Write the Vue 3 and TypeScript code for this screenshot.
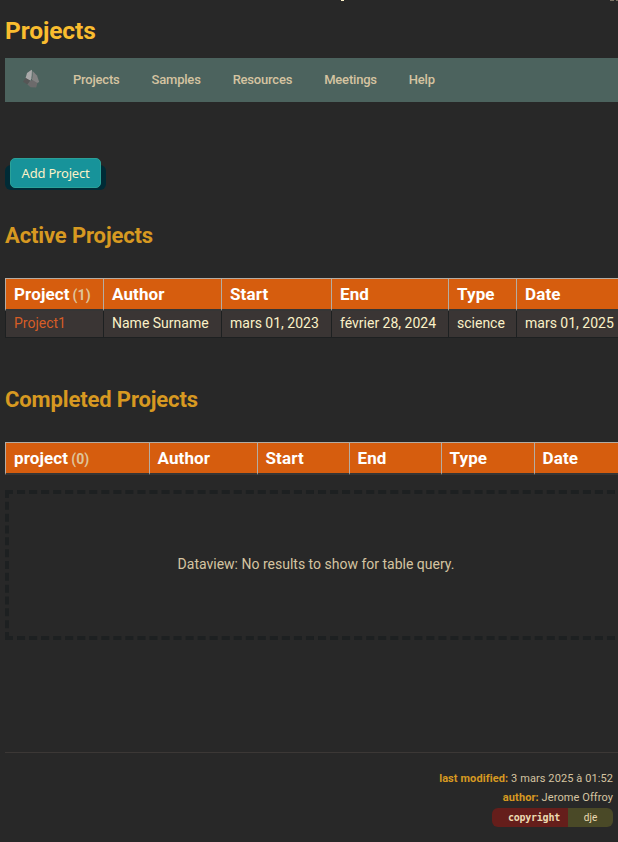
<script setup lang="ts">
interface Column { label: string; width: number; count?: number }

const links: string[] = ['Projects', 'Samples', 'Resources', 'Meetings', 'Help']

const activeColumns: Column[] = [
  { label: 'Project', width: 98, count: 1 },
  { label: 'Author', width: 118 },
  { label: 'Start', width: 110 },
  { label: 'End', width: 117 },
  { label: 'Type', width: 68 },
  { label: 'Date', width: 111 },
]
const activeRow: string[] = ['Project1', 'Name Surname', 'mars 01, 2023', 'février 28, 2024', 'science', 'mars 01, 2025']

const completedColumns: Column[] = [
  { label: 'project', width: 144, count: 0 },
  { label: 'Author', width: 108 },
  { label: 'Start', width: 92 },
  { label: 'End', width: 92 },
  { label: 'Type', width: 93 },
  { label: 'Date', width: 93 },
]
</script>

<template>
  <main class="page">
    <h1>Projects</h1>
    <nav class="nav">
      <svg class="logo" width="18" height="20" viewBox="0 0 18 20">
        <path fill="#a9a9a9" d="M8.6 .8 9.6 3 8.6 9.2 7.2 12 2.6 9 4 4z" />
        <path fill="#828282" d="M9.6 2 14 6.4 16.2 13 13.2 14.4 9 11z" />
        <path fill="#565656" d="M2.6 9 7.2 11.5 4.4 15.6 0 12.8z" />
        <path fill="#6c6a6b" d="M7 12 9.4 11 14.4 14 13.2 18.6 7.6 18.2 4.4 15.6z" />
        <path fill="none" stroke="#4c635e" stroke-width=".6" d="M9.4 2 8.8 9.5" />
      </svg>
      <a v-for="link in links" :key="link">{{ link }}</a>
    </nav>

    <div class="action"><button type="button">Add Project</button></div>

    <h2>Active Projects</h2>
    <table class="active">
      <colgroup><col v-for="c in activeColumns" :key="c.label" :style="{ width: c.width + 'px' }" /></colgroup>
      <thead>
        <tr><th v-for="c in activeColumns" :key="c.label">{{ c.label }}<span v-if="c.count !== undefined" class="count">({{ c.count }})</span></th></tr>
      </thead>
      <tbody>
        <tr><td v-for="(cell, i) in activeRow" :key="i" :class="{ link: i === 0 }">{{ cell }}</td></tr>
      </tbody>
    </table>

    <h2 class="second">Completed Projects</h2>
    <table class="completed">
      <colgroup><col v-for="c in completedColumns" :key="c.label" :style="{ width: c.width + 'px' }" /></colgroup>
      <thead>
        <tr><th v-for="c in completedColumns" :key="c.label">{{ c.label }}<span v-if="c.count !== undefined" class="count">({{ c.count }})</span></th></tr>
      </thead>
    </table>
    <div class="empty">Dataview: No results to show for table query.</div>

    <footer>
      <div><b>last modified:</b> 3 mars 2025 à 01:52</div>
      <div><b>author:</b> Jerome Offroy</div>
      <div class="badge"><span class="key">copyright</span><span class="value">dje</span></div>
    </footer>
  </main>
</template>

<style>
body { background: #282828; overflow: hidden; }
</style>

<style scoped>
.page {
  position: relative;
  box-sizing: border-box;
  width: 618px;
  height: 842px;
  padding: 15px 0 0 5px;
  overflow: hidden;
  background: #282828;
  color: #d5c4a1;
  font-family: Roboto, "Liberation Sans", sans-serif;
  font-size: 14px;
}
/* Lower edges of the title bar's text, which is scrolled out of view */
.page::before, .page::after {
  content: "";
  position: absolute;
  top: 0;
  height: 1px;
}
.page::before { left: 341px; width: 3px; background: #fbf1c7; }
.page::after { left: 610px; width: 8px; background: linear-gradient(90deg, #7c7567 0 4px, #282828 4px 6px, #7c7567 6px); }
h1 { margin: 0; height: 43px; color: #fabd2f; font-size: 24.5px; line-height: 32px; font-weight: 700; letter-spacing: -0.1px; }
.nav { display: flex; align-items: center; gap: 32px; height: 44px; padding-left: 18px; background: #4c635e; }
.nav a { color: #d5c4a1; font-size: 13px; font-weight: 500; line-height: 18px; letter-spacing: -0.2px; }
.logo { flex: none; position: relative; top: -1px; }
.action {
  display: flex;
  width: 101px;
  height: 25px;
  margin-top: 63px;
  border-radius: 6px;
  background: #002b36;
}
button {
  width: 91px;
  height: 30px;
  margin: -7px 5px 0;
  padding: 0;
  border: 1px solid #2aa198;
  border-radius: 5px;
  background: #17939a;
  color: #fbf1c7;
  font: 13px/28px "Noto Sans", sans-serif;
  letter-spacing: -0.2px;
}
h2 { margin: 30px 0 0; height: 58px; color: #d79921; font-size: 22px; line-height: 32px; font-weight: 700; letter-spacing: -0.13px; }
h2.second { margin-top: 46px; }
table { table-layout: fixed; border-collapse: separate; border-spacing: 0; }
.active, .completed { width: 622px; }
th, td { box-sizing: border-box; padding: 0 0 0 8px; text-align: left; white-space: nowrap; }
th {
  height: 33px;
  border-top: 1px solid #b5aca2;
  border-left: 1px solid #b5aca2;
  border-bottom: 2px solid #353535;
  background: #d65d0e;
  background-clip: padding-box;
  color: #fff;
  font-size: 17px;
  line-height: 28px;
  font-weight: 700;
  letter-spacing: 0.12px;
}
.completed th { padding-left: 7.5px; }
.completed th:first-child { padding-left: 8px; }
.count { margin-left: 3px; color: #dfc49a; font-size: 14px; font-weight: 700; letter-spacing: 0.1px; }
td { height: 27px; padding-bottom: 2px; border-left: 1px solid #1d2021; border-bottom: 1px solid #1d2021; background: #3a3534; color: #fbf1c7; line-height: 24px; }
td.link { color: #d65d26; }
.empty {
  box-sizing: border-box;
  display: flex;
  align-items: center;
  justify-content: center;
  width: 622px;
  height: 150px;
  margin-top: 15px;
  padding-bottom: 2px;
  border: 4px dashed #1d2021;
}
footer {
  display: flex;
  flex-direction: column;
  align-items: flex-end;
  margin-top: 112px;
  padding: 16px 5px 0 0;
  border-top: 1px solid #3c3836;
  font-size: 11px;
  line-height: 19px;
  letter-spacing: 0.09px;
}
footer b { color: #d79921; font-weight: 700; }
.badge { display: flex; height: 19px; margin-top: 1px; border-radius: 6px; overflow: hidden; color: #ebdbb2; }
.key { box-sizing: border-box; width: 76px; padding-left: 16px; background: #651e1b; font: 700 10px/19px "DejaVu Sans Mono", monospace; letter-spacing: -0.25px; }
.value { width: 45px; background: #4a4927; text-align: center; font-size: 10px; }
</style>
